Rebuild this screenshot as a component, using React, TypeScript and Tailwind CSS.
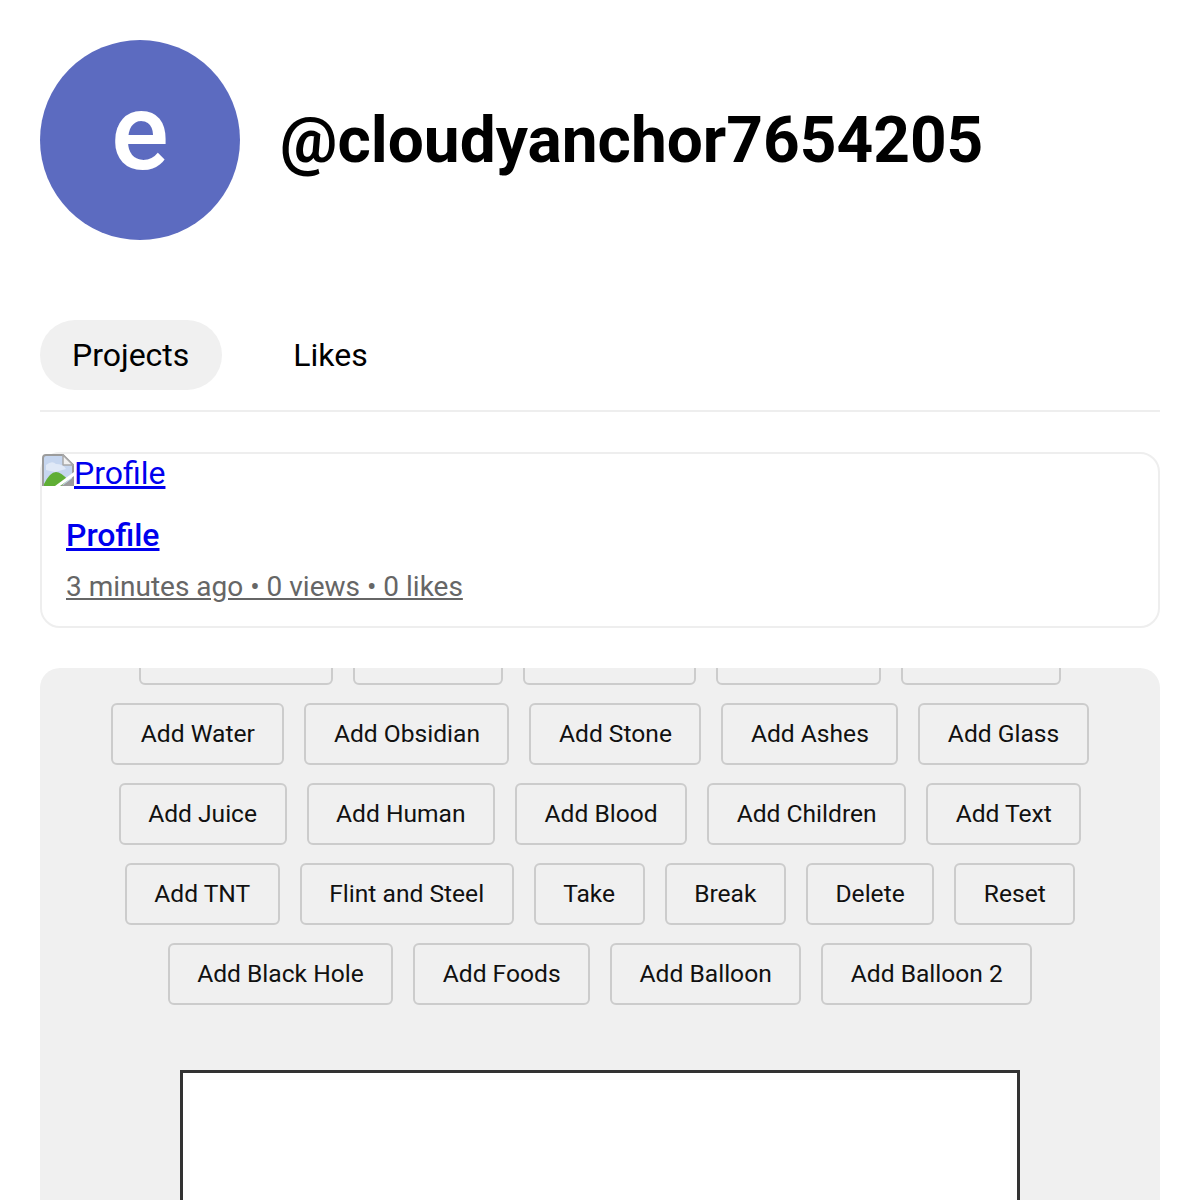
const buttons = [
  { label: "", width: "w-[194px]" },
  { label: "", width: "w-[150px]" },
  { label: "", width: "w-[173px]" },
  { label: "", width: "w-[165px]" },
  { label: "", width: "w-[160px]" },
  { label: "Add Water" },
  { label: "Add Obsidian" },
  { label: "Add Stone" },
  { label: "Add Ashes" },
  { label: "Add Glass" },
  { label: "Add Juice" },
  { label: "Add Human" },
  { label: "Add Blood" },
  { label: "Add Children" },
  { label: "Add Text" },
  { label: "Add TNT" },
  { label: "Flint and Steel" },
  { label: "Take" },
  { label: "Break" },
  { label: "Delete" },
  { label: "Reset" },
  { label: "Add Black Hole" },
  { label: "Add Foods" },
  { label: "Add Balloon" },
  { label: "Add Balloon 2" },
];

function BrokenImage() {
  return (
    <svg width="32" height="32" viewBox="0 0 32 32" className="shrink-0">
      <path d="M1 32V4Q1 1 4 1H21L31 11V32Z" fill="#c6d6ef" stroke="#9c9c9c" strokeWidth="2" />
      <path d="M21 1V11H31Z" fill="#f0f0f0" stroke="#a8a8a8" strokeWidth="1.5" />
      <path d="M4 11Q10 6 14 10Q21 10 24 15L13 18L4 16Z" fill="#e0e9f7" />
      <path d="M2 32V30Q8 18 14 18Q19 18 26 26L19 32Z" fill="#5fae35" />
      <path d="M13 32L32 18V22L18 32Z" fill="#ffffff" />
      <path d="M20 32L32 23V32Z" fill="#9c9c9c" />
    </svg>
  );
}

export default function App() {
  return (
    <div className="h-[1200px] overflow-hidden bg-white p-10 font-['Roboto',sans-serif] text-black">
      <header className="flex items-center gap-10">
        <div className="flex h-[200px] w-[200px] items-center justify-center rounded-full bg-[#5c6bc0] pb-4">
          <span className="text-[108px] font-medium leading-none text-white">e</span>
        </div>
        <h1 className="pt-[2px] text-[64px] font-bold leading-none">@cloudyanchor7654205</h1>
      </header>

      <nav className="mt-20 flex gap-[39px] border-b-2 border-[#eeeeee] pb-5">
        <a className="rounded-[35px] bg-[#f0f0f0] pl-8 pr-[33px] py-[16px] text-[32px] leading-[38px]">Projects</a>
        <a className="px-8 py-[16px] text-[32px] leading-[38px]">Likes</a>
      </nav>

      <div className="mt-10 h-[176px] rounded-[20px] border-2 border-[#eeeeee]">
        <a className="flex h-[36px] items-start text-[32px] leading-[38px] text-[#0000ee] underline">
          <BrokenImage />
          Profile
        </a>
        <div className="px-6 pt-[26px]">
          <a className="block text-[32px] font-medium leading-[38px] text-[#0000ee] underline">Profile</a>
          <a className="mt-[16px] block text-[28px] leading-[33px] text-[#666666] underline">
            3 minutes ago • 0 views • 0 likes
          </a>
        </div>
      </div>

      <section className="mt-10 h-[700px] overflow-hidden rounded-[20px] bg-[#f0f0f0]">
        <div className="-mt-[45px] flex flex-wrap justify-center gap-x-5 gap-y-[18px] px-10">
          {buttons.map((b, i) => (
            <button
              key={i}
              className={`h-[62px] rounded-md border-2 border-[#cccccc] px-[27.5px] text-[24.6px] text-[#111111] ${b.width ?? ""}`}
            >
              {b.label}
            </button>
          ))}
        </div>
        <div className="mx-auto mt-[65px] h-[600px] w-[840px] border-[3px] border-[#333333] bg-white" />
      </section>
    </div>
  );
}
